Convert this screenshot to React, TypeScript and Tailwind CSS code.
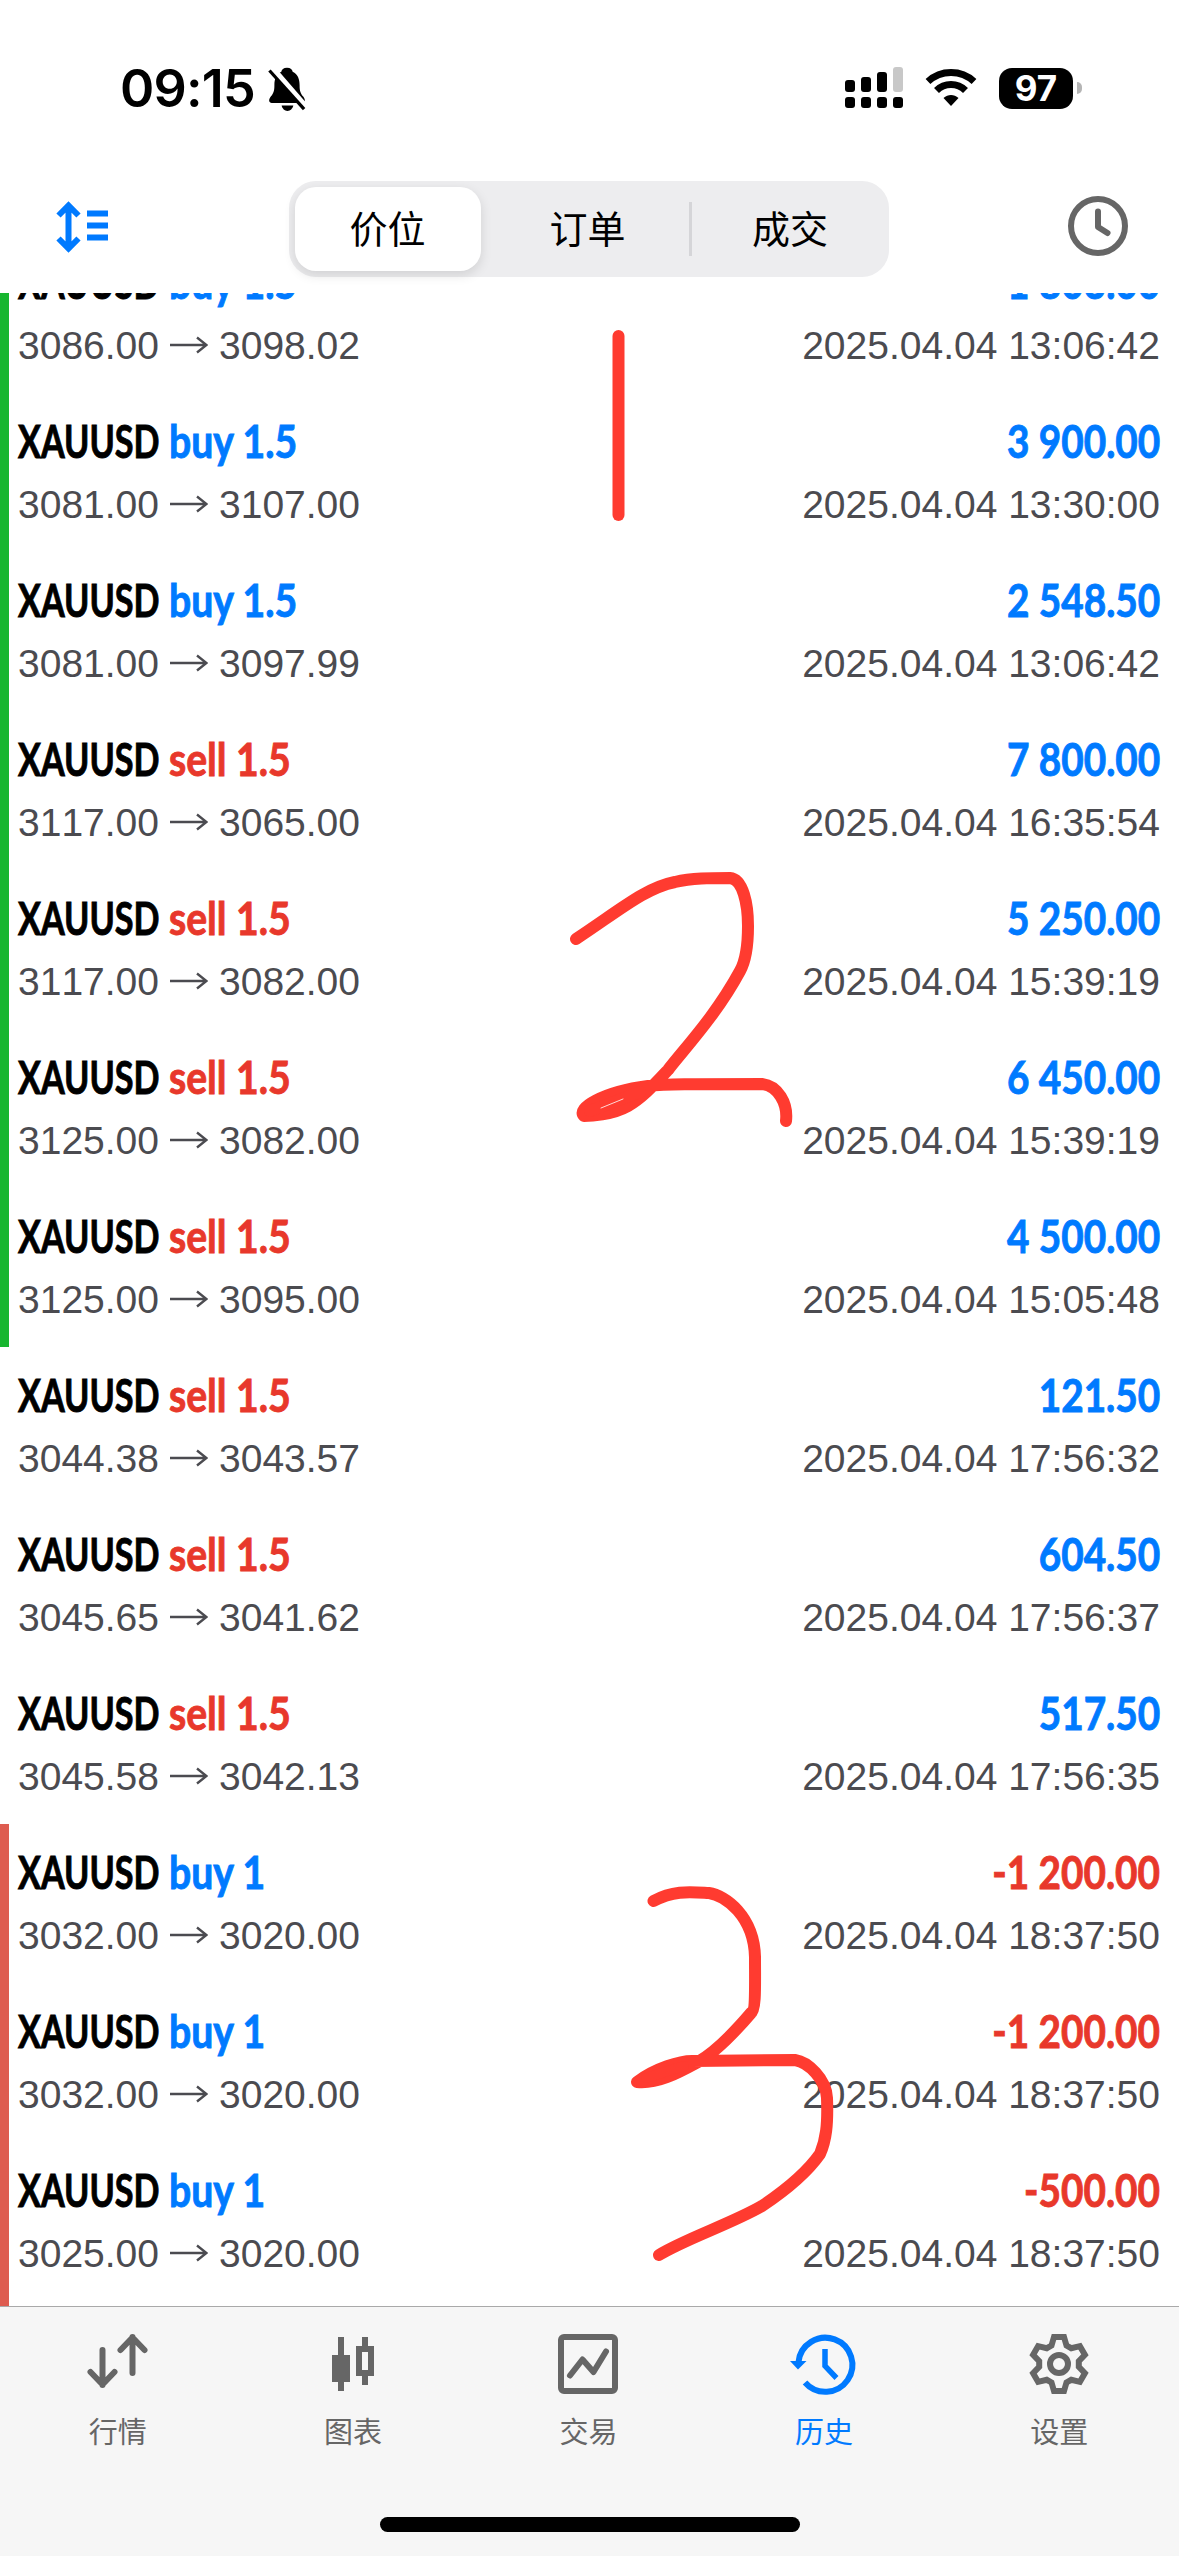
type Deal = {
  side: "buy" | "sell";
  volume: string;
  open: string;
  close: string;
  profit: string;
  time: string;
  mark: "tp" | "sl" | null;
};

const deals: Deal[] = [
  { side: "buy", volume: "1.5", open: "3086.00", close: "3098.02", profit: "1 803.00", time: "2025.04.04 13:06:42", mark: "tp" },
  { side: "buy", volume: "1.5", open: "3081.00", close: "3107.00", profit: "3 900.00", time: "2025.04.04 13:30:00", mark: "tp" },
  { side: "buy", volume: "1.5", open: "3081.00", close: "3097.99", profit: "2 548.50", time: "2025.04.04 13:06:42", mark: "tp" },
  { side: "sell", volume: "1.5", open: "3117.00", close: "3065.00", profit: "7 800.00", time: "2025.04.04 16:35:54", mark: "tp" },
  { side: "sell", volume: "1.5", open: "3117.00", close: "3082.00", profit: "5 250.00", time: "2025.04.04 15:39:19", mark: "tp" },
  { side: "sell", volume: "1.5", open: "3125.00", close: "3082.00", profit: "6 450.00", time: "2025.04.04 15:39:19", mark: "tp" },
  { side: "sell", volume: "1.5", open: "3125.00", close: "3095.00", profit: "4 500.00", time: "2025.04.04 15:05:48", mark: "tp" },
  { side: "sell", volume: "1.5", open: "3044.38", close: "3043.57", profit: "121.50", time: "2025.04.04 17:56:32", mark: null },
  { side: "sell", volume: "1.5", open: "3045.65", close: "3041.62", profit: "604.50", time: "2025.04.04 17:56:37", mark: null },
  { side: "sell", volume: "1.5", open: "3045.58", close: "3042.13", profit: "517.50", time: "2025.04.04 17:56:35", mark: null },
  { side: "buy", volume: "1", open: "3032.00", close: "3020.00", profit: "-1 200.00", time: "2025.04.04 18:37:50", mark: "sl" },
  { side: "buy", volume: "1", open: "3032.00", close: "3020.00", profit: "-1 200.00", time: "2025.04.04 18:37:50", mark: "sl" },
  { side: "buy", volume: "1", open: "3025.00", close: "3020.00", profit: "-500.00", time: "2025.04.04 18:37:50", mark: "sl" },
];

const markColor = (mark: Deal["mark"]) => {
  if (mark === "tp") return "bg-[#17b62f]";
  if (mark === "sl") return "bg-[#de5c50]";
  return "bg-transparent";
};

function StatusBar() {
  return (
    <div className="flex h-[176px] shrink-0 justify-between pl-[120px] pr-[97px] pt-[64px]">
      <div className="flex h-[48px] items-center">
        <span className="w-[138px] whitespace-nowrap pt-[2px] font-['Inter'] text-[52px] leading-[48px] font-semibold tracking-[-0.8px] text-black">09:15</span>
        <svg className="ml-[9px] h-[45px] w-[40px]" viewBox="0 0 42 50" fill="none">
          <path d="M21 2c-4 0-6 2-6.300 4.500C9 9 7 15 7 21c0 7-1 9-4 13-3 4-2 7 1 7h34c3 0 4-3 1-7s-4-6-4-13c0-6-2-12-7.700-14.500C27 4 25 2 21 2Z" fill="#000" />
          <path d="M15 44h13c-.8 3.500-3.300 6-6.500 6S15.800 47.500 15 44Z" fill="#000" />
          <path d="M4 2L43 47" stroke="#fff" strokeWidth="7" />
          <path d="M1.500 5L40 48" stroke="#000" strokeWidth="3.600" />
        </svg>
      </div>
      <div className="flex h-[48px] items-center">
        <svg className="h-[48px] w-[60px]" viewBox="0 0 60 48">
          <g fill="#000">
            <rect x="1" y="16" width="10" height="12" rx="3" />
            <rect x="17" y="13" width="10" height="15" rx="3" />
            <rect x="33" y="8" width="10" height="20" rx="3" />
            <rect x="1" y="33" width="10" height="11" rx="3" />
            <rect x="17" y="33" width="10" height="11" rx="3" />
            <rect x="33" y="33" width="10" height="11" rx="3" />
            <rect x="49" y="33" width="10" height="11" rx="3" />
          </g>
          <rect x="49" y="3" width="10" height="25" rx="3" fill="#c8c8c8" />
        </svg>
        <svg className="ml-[21px] h-[48px] w-[52px]" viewBox="0 0 52 48" fill="none" stroke="#000">
          <path d="M3 17.500C9.500 11.500 17 8.500 26 8.500s16.500 3 23 9" strokeWidth="7" />
          <path d="M11.500 26.500C15.500 22.500 20.500 20.500 26 20.500s10.500 2 14.500 6" strokeWidth="7" />
          <path d="M26 42l-7.500-8c4.500-4 10.500-4 15 0Z" fill="#000" stroke="none" />
        </svg>
        <div className="ml-[22px] flex h-[41px] w-[74px] items-center justify-center rounded-[13px] bg-black font-['Inter'] text-[35px] leading-none font-bold text-white">97</div>
        <div className="ml-[4px] h-[12px] w-[5px] rounded-r-full bg-[#b5b5b5]" />
      </div>
    </div>
  );
}

function Header() {
  return (
    <div className="flex h-[117px] shrink-0 justify-between pl-[56px] pr-[50px]">
      <svg className="mt-[25px] h-[54px] w-[54px]" viewBox="0 0 54 54" fill="none" stroke="#007aff" strokeWidth="6">
        <path d="M12.500 5v43M2.500 14.500l10-10 10 10M2.500 37.500l10 10 10-10" />
        <path d="M31 12.500h21M31 24.500h21M31 36.500h21" />
      </svg>
      <div className="ml-[58px] mt-[5px] flex h-[96px] w-[600px] items-center rounded-[27px] bg-[#ededef] p-[6px] font-['Noto_Sans_CJK_SC',sans-serif] text-[38px] text-black">
        <div className="flex h-[84px] w-[186px] items-center justify-center rounded-[21px] bg-white pb-[6px] shadow-[0_4px_12px_rgba(0,0,0,0.12)]">价位</div>
        <div className="flex flex-1 justify-center pb-[6px] pl-[6px]">订单</div>
        <div className="h-[54px] w-[3px] bg-[#d5d5d8]" />
        <div className="flex w-[191px] justify-center pb-[6px] pl-[6px]">成交</div>
      </div>
      <svg className="ml-[58px] mt-[20px] h-[60px] w-[62px]" viewBox="0 0 60 60" fill="none" stroke="#666" strokeWidth="6">
        <circle cx="30" cy="30" r="27" />
        <path d="M30 15.500V31l9.500 6" strokeLinecap="round" strokeLinejoin="round" />
      </svg>
    </div>
  );
}

function DealRow({ deal }: { deal: Deal }) {
  return (
    <div className="flex h-[159px] shrink-0">
      <div className={`w-[9px] shrink-0 ${markColor(deal.mark)}`} />
      <div className="flex flex-1 flex-col pl-[9px] pr-[19px] pt-[20px]">
        <div className="flex h-[56px] justify-between whitespace-nowrap font-['Lato'] text-[45px] leading-[56px] font-bold [-webkit-text-stroke:0.9px_currentColor]">
          <div className="flex">
            <span className="w-[151px] origin-left scale-x-[0.76] text-black">XAUUSD</span>
            <span className={`origin-left scale-x-[0.87] ${deal.side === "buy" ? "text-[#007aff]" : "text-[#e8382b]"}`}>
              {deal.side} {deal.volume}
            </span>
          </div>
          <span className={`origin-right scale-x-[0.86] ${deal.profit.startsWith("-") ? "text-[#e8382b]" : "text-[#007aff]"}`}>
            {deal.profit}
          </span>
        </div>
        <div className="mt-[12px] flex h-[48px] justify-between whitespace-nowrap font-['Liberation_Sans'] text-[39px] leading-[48px] text-[#4b4b50] [font-kerning:none]">
          <div className="flex">
            <span className="w-[152px]">{deal.open}</span>
            <svg className="mt-[14px] h-[18px] w-[38px]" viewBox="0 0 38 18" fill="none" stroke="#4b4b50" strokeWidth="2.400">
              <path d="M0 9h36M27 1.500l9.500 7.500-9.500 7.500" />
            </svg>
            <span className="ml-[11px]">{deal.close}</span>
          </div>
          <span>{deal.time}</span>
        </div>
      </div>
    </div>
  );
}

// hand drawn markers over the list
function Marker() {
  return (
    <svg className="pointer-events-none absolute left-0 top-0 h-[2013px] w-[1179px]" viewBox="0 293 1179 2013" fill="none" stroke="#ff3b30" strokeWidth="12" strokeLinecap="round" strokeLinejoin="round">
      <path d="M618.500 336V515" />
      <path d="M576 939C620 910 645 888 675 882C692 878 710 878 730 878C743 879 748 904 748 926C748 948 745 962 740 971C715 1017 684 1049 668 1070C653 1086 642 1098 628 1106C612 1115 590 1116 584 1116C576 1109 602 1092 648 1086C665 1084 690 1084 762 1084C778 1086 788 1103 786 1121" />
      <path d="M590 1111L640 1092" />
      <path d="M601 1108L623 1099" stroke="#fff" strokeWidth="0.800" />
      <path d="M653.500 1901C674 1890 690 1892 709 1893C725 1895 754 1916 755 1957C755 1985 756 2010 751 2013C728 2040 712 2054 698 2062C676 2074 657 2084 637 2082C656 2068 680 2061 692 2061L795 2060C808 2062 826 2079 827 2098C828 2125 826 2140 820 2154C808 2171 786 2190 762 2206C733 2223 685 2239 659 2255" />
      <path d="M646 2078L684 2066" strokeWidth="10" />
    </svg>
  );
}

const tabs = [
  {
    label: "行情",
    icon: (
      <path d="M14.500 16v35M2.500 38l12 12.500L26.500 38M44.500 39V3M32.500 16L44.500 3.500 56.500 16" strokeLinecap="round" strokeLinejoin="round" />
    ),
  },
  {
    label: "图表",
    icon: (
      <>
        <path d="M18 3v54M42 3v10M42 39v12" />
        <rect x="9" y="21" width="18" height="27" fill="currentColor" stroke="none" />
        <rect x="36" y="15" width="12" height="24" />
      </>
    ),
  },
  {
    label: "交易",
    icon: (
      <>
        <rect x="3" y="3" width="54" height="54" rx="3" />
        <path d="M12 41.500l12.500-16L35.500 38 48 17.500" strokeLinecap="round" strokeLinejoin="round" />
      </>
    ),
  },
  {
    label: "历史",
    active: true,
    icon: (
      <>
        <path d="M4.500 28A27 27 0 1 1 11 48.500" />
        <path d="M-4 27h16.500L4 35.500Z" fill="currentColor" stroke="none" />
        <path d="M31 15v17l11.500 12" strokeWidth="5.500" />
      </>
    ),
  },
  {
    label: "设置",
    icon: (
      <>
        <path d="M25 3h10l2.500 8.500 4.800 2.700 8.600-2 5 8.600-6.100 6.400v5.600l6.100 6.400-5 8.600-8.600-2-4.800 2.700L35 57H25l-2.500-8.500-4.800-2.700-8.600 2-5-8.600 6.100-6.400v-5.600l-6.100-6.400 5-8.600 8.600 2 4.800-2.700Z" />
        <circle cx="30" cy="30" r="9" />
      </>
    ),
  },
];

function TabBar() {
  return (
    <div className="flex h-[250px] shrink-0 flex-col items-center border-t border-[#a9a9a9] bg-[#f6f6f6]">
      <div className="grid w-full grid-cols-5 pr-[2px] pt-[27px]">
        {tabs.map((tab) => (
          <div key={tab.label} className={`flex flex-col items-center ${tab.active ? "text-[#007aff]" : "text-[#666]"}`}>
            <svg className="h-[60px] w-[60px] overflow-visible" viewBox="0 0 60 60" fill="none" stroke="currentColor" strokeWidth="6">
              {tab.icon}
            </svg>
            <span className="mt-[15px] font-['Noto_Sans_CJK_SC',sans-serif] text-[29px] leading-[42px]">{tab.label}</span>
          </div>
        ))}
      </div>
      <div className="mt-[66px] h-[15px] w-[420px] rounded-full bg-black" />
    </div>
  );
}

export default function App() {
  return (
    <div className="flex h-[2556px] w-[1179px] flex-col overflow-hidden bg-white">
      <StatusBar />
      <Header />
      <div className="relative h-[2013px] shrink-0 overflow-hidden">
        <div className="-mt-[59px] flex flex-col">
          {deals.map((deal, idx) => (
            <DealRow key={idx} deal={deal} />
          ))}
          <div className="h-[5px] w-[9px] bg-[#de5c50]" />
        </div>
        <Marker />
      </div>
      <TabBar />
    </div>
  );
}
